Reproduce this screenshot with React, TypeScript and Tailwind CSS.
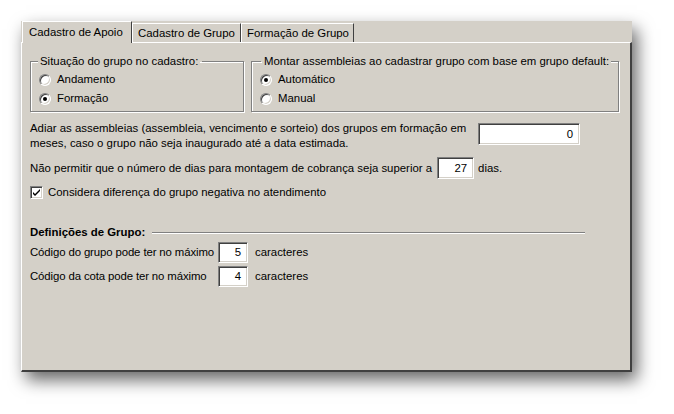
import { useState } from "react";

const sunken =
  "bg-white border border-t-[#808080] border-l-[#808080] border-b-white border-r-white shadow-[inset_1px_1px_0_#404040,inset_-1px_-1px_0_#d4d0c8]";

// classic win32 radio button
const Radio = ({ checked, label }: { checked: boolean; label: string }) => (
  <div className="flex items-center h-[19px] gap-[6px]">
    <span
      className={`w-[12px] h-[12px] rounded-full flex items-center justify-center ${sunken}`}
    >
      {checked && <span className="w-[4px] h-[4px] rounded-full bg-black" />}
    </span>
    <span>{label}</span>
  </div>
);

const NumBox = ({ value, className }: { value: string; className: string }) => (
  <div className={`${sunken} shrink-0 flex items-center justify-end pr-[6px] ${className}`}>
    {value}
  </div>
);

const tabs = [
  { label: "Cadastro de Apoio", w: "w-[110px]" },
  { label: "Cadastro de Grupo", w: "w-[109px]" },
  { label: "Formação de Grupo", w: "w-[113px]" },
];

export default function App() {
  const [active] = useState(0);

  return (
    <div className="w-[674px] h-[414px] bg-white pl-[21px] pt-[21px] font-['Liberation_Sans',Arial,sans-serif] text-[11.4px] leading-[13px] text-black">
      <div className="w-[611px] h-[351px] bg-[#d4d0c8] flex flex-col shadow-[5px_8px_16px_rgba(0,0,0,0.6)]">
        {/* tab strip */}
        <div className="flex items-end h-[21px] pl-[1px]">
          {tabs.map((t, i) =>
            i === active ? (
              <div
                key={t.label}
                className={`${t.w} h-[22px] -mb-px relative z-10 bg-[#d4d0c8] border-t border-l border-white border-r border-r-[#404040] pl-[6px] pt-[4px]`}
              >
                {t.label}
              </div>
            ) : (
              <div
                key={t.label}
                className={`${t.w} h-[19px] border-t border-l border-white border-r border-r-[#404040] pl-[5px] pt-[3px]`}
              >
                {t.label}
              </div>
            )
          )}
        </div>

        {/* tab page */}
        <div className="flex-1 border-t border-l border-white border-r-2 border-b-2 border-r-[#404040] border-b-[#404040] pl-[8px] pt-[12px]">
          <div className="flex gap-[7px]">
            <fieldset className="w-[214px] border border-[#808080] shadow-[inset_1px_1px_0_#fff,1px_1px_0_#fff] pl-[8px] pt-[2px] pb-[3px]">
              <legend className="ml-[1px] px-[2px] bg-[#d4d0c8] relative -left-[2px]">
                Situação do grupo no cadastro:
              </legend>
              <Radio checked={false} label="Andamento" />
              <Radio checked label="Formação" />
            </fieldset>
            <fieldset className="w-[368px] border border-[#808080] shadow-[inset_1px_1px_0_#fff,1px_1px_0_#fff] pl-[8px] pt-[2px] pb-[3px]">
              <legend className="ml-[1px] px-[2px] bg-[#d4d0c8] relative left-[1px]">
                Montar assembleias ao cadastrar grupo com base em grupo default:
              </legend>
              <Radio checked label="Automático" />
              <Radio checked={false} label="Manual" />
            </fieldset>
          </div>

          <div className="flex items-start mt-[9px]">
            <p className="w-[448px] leading-[15px] whitespace-nowrap">
              Adiar as assembleias (assembleia, vencimento e sorteio) dos grupos em formação em
              <br />
              meses, caso o grupo não seja inaugurado até a data estimada.
            </p>
            <NumBox value="0" className="w-[102px] h-[22px] mt-[2px]" />
          </div>

          <div className="flex items-center mt-[6px] h-[22px]">
            <span className="mr-[5px]">
              Não permitir que o número de dias para montagem de cobrança seja superior a
            </span>
            <NumBox value="27" className="w-[37px] h-[22px]" />
            <span className="ml-[4px]">dias.</span>
          </div>

          <div className="flex items-center mt-[5px] h-[16px] gap-[5px]">
            <span className={`w-[13px] h-[13px] flex items-center justify-center ${sunken}`}>
              <svg width="9" height="9" viewBox="0 0 9 9">
                <path d="M1 4 L3 6 L8 1 V3 L3 8 L1 6 Z" fill="#000" />
              </svg>
            </span>
            <span>Considera diferença do grupo negativa no atendimento</span>
          </div>

          <div className="flex items-center mt-[25px] h-[15px] w-[555px]">
            <span className="font-bold whitespace-nowrap">Definições de Grupo:</span>
            <div className="flex-1 ml-[7px] h-[2px] border-t border-t-[#808080] border-b border-b-white" />
          </div>

          <div className="flex items-center mt-[2px] h-[21px]">
            <span className="w-[188px] shrink-0 whitespace-nowrap tracking-[-0.12px]">
              Código do grupo pode ter no máximo
            </span>
            <NumBox value="5" className="w-[30px] h-[21px]" />
            <span className="ml-[7px]">caracteres</span>
          </div>

          <div className="flex items-center mt-[3px] h-[21px]">
            <span className="w-[188px] shrink-0 whitespace-nowrap tracking-[-0.12px]">
              Código da cota pode ter no máximo
            </span>
            <NumBox value="4" className="w-[30px] h-[21px]" />
            <span className="ml-[7px]">caracteres</span>
          </div>
        </div>
      </div>
    </div>
  );
}
